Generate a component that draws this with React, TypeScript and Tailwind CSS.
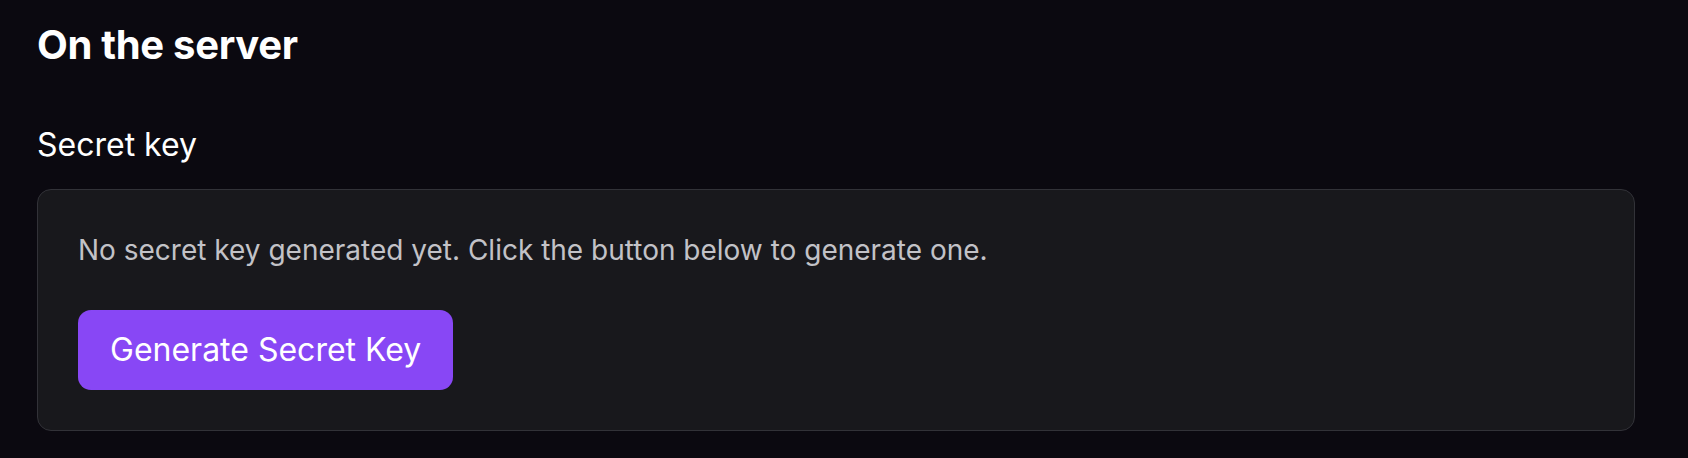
export default function App() {
  return (
    <div className="min-h-screen bg-[#0b0910] px-[37px] pt-[25px] pb-[27px] font-['Inter','Noto_Sans',sans-serif] text-white">
      <h2 className="text-[40px] leading-[40px] font-bold tracking-[-0.3px]">On the server</h2>

      <h3 className="mt-[57px] text-[32px] leading-[45px] font-normal">Secret key</h3>

      <div className="mt-[22px] w-[1598px] rounded-[14px] border border-[#323238] bg-[#18181c] p-10">
        <p className="text-[28px] leading-[40px] text-[#c2c2c7]">
          No secret key generated yet. Click the button below to generate one.
        </p>
        <button
          type="button"
          className="mt-[40px] flex h-[80px] items-center rounded-[13px] bg-[#8847f5] px-8 text-[32px] font-normal text-white"
        >
          Generate Secret Key
        </button>
      </div>
    </div>
  );
}
